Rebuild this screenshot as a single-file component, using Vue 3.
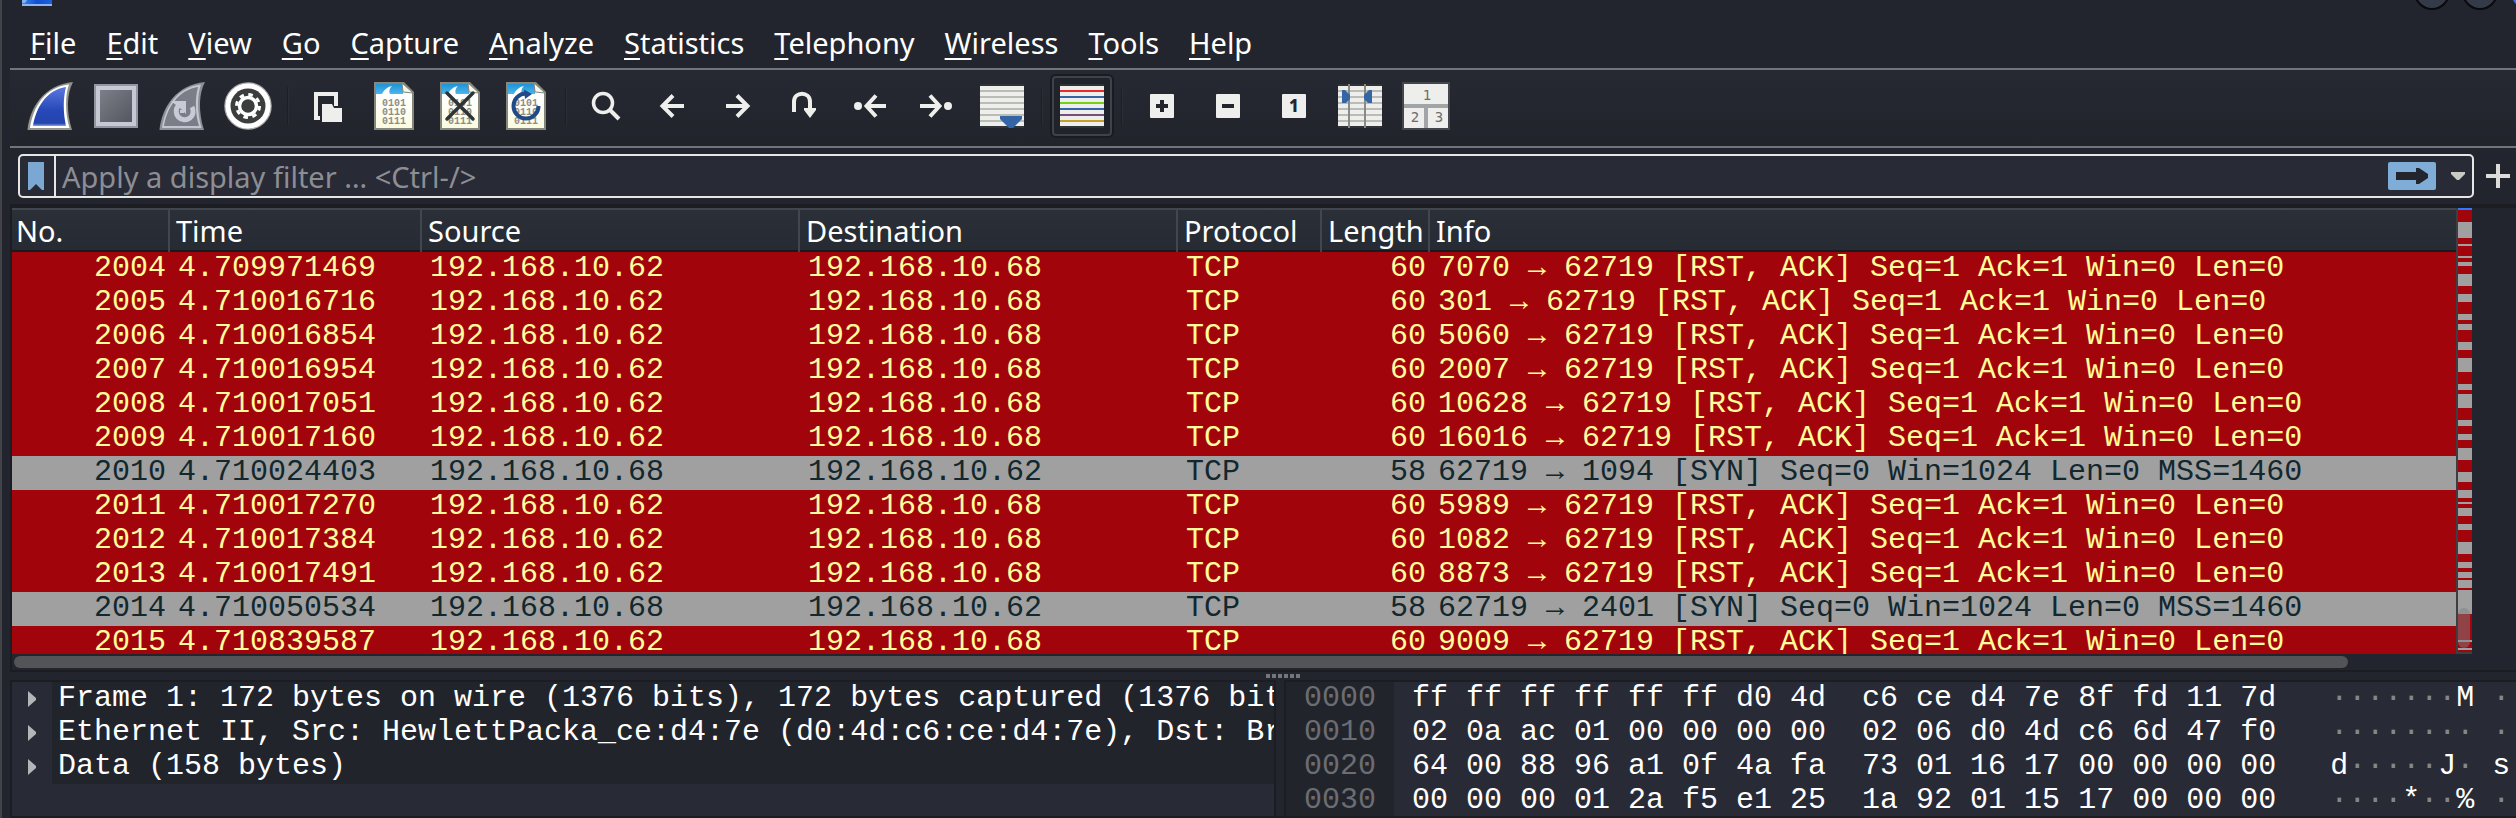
<script setup>
import { ref } from 'vue'

const menus = ['File', 'Edit', 'View', 'Go', 'Capture', 'Analyze', 'Statistics', 'Telephony', 'Wireless', 'Tools', 'Help']
const filter = ref('')

const columns = [
  { name: 'No.', cls: 'c-no' },
  { name: 'Time', cls: 'c-time' },
  { name: 'Source', cls: 'c-addr' },
  { name: 'Destination', cls: 'c-addr' },
  { name: 'Protocol', cls: 'c-proto' },
  { name: 'Length', cls: 'c-len' },
  { name: 'Info', cls: 'c-info' },
]

const rst = (no, time, port) => ({
  no, time, src: '192.168.10.62', dst: '192.168.10.68', len: 60, kind: 'rst',
  info: `${port} → 62719 [RST, ACK] Seq=1 Ack=1 Win=0 Len=0`,
})
const syn = (no, time, port) => ({
  no, time, src: '192.168.10.68', dst: '192.168.10.62', len: 58, kind: 'syn',
  info: `62719 → ${port} [SYN] Seq=0 Win=1024 Len=0 MSS=1460`,
})
const packets = [
  rst(2004, '4.709971469', 7070),
  rst(2005, '4.710016716', 301),
  rst(2006, '4.710016854', 5060),
  rst(2007, '4.710016954', 2007),
  rst(2008, '4.710017051', 10628),
  rst(2009, '4.710017160', 16016),
  syn(2010, '4.710024403', 1094),
  rst(2011, '4.710017270', 5989),
  rst(2012, '4.710017384', 1082),
  rst(2013, '4.710017491', 8873),
  syn(2014, '4.710050534', 2401),
  rst(2015, '4.710839587', 9009),
]

// [top, height] of each grey band in the packet minimap
const bands = [
  [14, 16], [36, 2], [48, 2], [54, 4], [66, 12], [86, 8], [106, 6], [116, 6], [134, 8], [150, 14],
  [176, 6], [186, 14], [212, 6], [226, 6], [240, 12], [264, 10], [282, 8], [294, 2], [300, 8],
  [316, 6], [334, 12], [354, 6], [364, 6], [372, 8], [382, 24], [432, 2], [440, 2],
]

const tree = [
  'Frame 1: 172 bytes on wire (1376 bits), 172 bytes captured (1376 bit',
  'Ethernet II, Src: HewlettPacka_ce:d4:7e (d0:4d:c6:ce:d4:7e), Dst: Br',
  'Data (158 bytes)',
]

const hex = [
  { off: '0000', a: 'ff ff ff ff ff ff d0 4d', b: 'c6 ce d4 7e 8f fd 11 7d', t: '·······M ·' },
  { off: '0010', a: '02 0a ac 01 00 00 00 00', b: '02 06 d0 4d c6 6d 47 f0', t: '········ ·' },
  { off: '0020', a: '64 00 88 96 a1 0f 4a fa', b: '73 01 16 17 00 00 00 00', t: 'd·····J· s' },
  { off: '0030', a: '00 00 00 01 2a f5 e1 25', b: '1a 92 01 15 17 00 00 00', t: '····*··% ·' },
]
const pieces = (t) => t.split(/(·+)/).filter(Boolean)

const lineYs = [8, 14, 20, 26, 32, 38]
const lineColors = ['#ef2929', '#3465a4', '#73d216', '#3465a4', '#75507b', '#c4a02a']

const tools = [
  { id: 'start', label: 'Start capturing packets' },
  { id: 'stop', label: 'Stop capturing packets' },
  { id: 'restart', label: 'Restart current capture' },
  { id: 'options', label: 'Capture options' },
  { id: 'sep' },
  { id: 'open', label: 'Open a capture file' },
  { id: 'save', label: 'Save this capture file' },
  { id: 'close', label: 'Close this capture file' },
  { id: 'reload', label: 'Reload this file' },
  { id: 'sep' },
  { id: 'find', label: 'Find a packet' },
  { id: 'back', label: 'Previous packet' },
  { id: 'forward', label: 'Next packet' },
  { id: 'goto', label: 'Go to packet' },
  { id: 'first', label: 'First packet' },
  { id: 'last', label: 'Last packet' },
  { id: 'scroll', label: 'Auto scroll' },
  { id: 'sep' },
  { id: 'color', label: 'Colorize packets' },
  { id: 'sep' },
  { id: 'zoomin', label: 'Enlarge text' },
  { id: 'zoomout', label: 'Shrink text' },
  { id: 'zoomone', label: 'Normal text size' },
  { id: 'resize', label: 'Resize columns' },
  { id: 'layout', label: 'Reset layout' },
]
</script>

<template>
  <div class="window">
    <header class="titlebar">
      <svg class="app-icon" width="30" height="6" viewBox="0 0 30 6" aria-hidden="true">
        <defs>
          <linearGradient id="appblue" x1="0" x2="1" y1="0" y2="0">
            <stop offset="0" stop-color="#3b86ee" /><stop offset="0.5" stop-color="#0f4fd0" /><stop offset="1" stop-color="#1d62dc" />
          </linearGradient>
        </defs>
        <rect width="30" height="6" fill="url(#appblue)" />
        <path d="M0 6V4H30V6Z" fill="#8fb4ee" />
        <path d="M0 0H5L3 3H0Z" fill="#7db4f6" />
      </svg>
      <svg class="win-buttons" width="104" height="10" viewBox="0 0 104 10" aria-hidden="true">
        <circle cx="20" cy="-8" r="17" fill="#343a47" stroke="#08090c" stroke-width="2" />
        <circle cx="68" cy="-8" r="17" fill="#343a47" stroke="#08090c" stroke-width="2" />
        <circle cx="116" cy="-8" r="17" fill="#2777ff" />
      </svg>
    </header>

    <nav class="menubar">
      <button v-for="m in menus" :key="m" type="button"><u>{{ m[0] }}</u>{{ m.slice(1) }}</button>
    </nav>

    <div class="toolbar" role="toolbar">
      <template v-for="(t, i) in tools" :key="i">
        <span v-if="t.id === 'sep'" class="sep"></span>
        <button v-else type="button" class="tool" :class="{ on: t.id === 'color' }" :aria-label="t.label">
          <svg width="48" height="48" viewBox="0 0 48 48" aria-hidden="true">
            <defs v-if="t.id === 'start'">
              <linearGradient id="fin" x1="0" x2="0" y1="0" y2="1">
                <stop offset="0" stop-color="#5a78e0" /><stop offset="0.6" stop-color="#2748b8" /><stop offset="0.93" stop-color="#2345ae" /><stop offset="1" stop-color="#8c9ee0" />
              </linearGradient>
              <linearGradient id="gray" x1="0" x2="1" y1="0" y2="1">
                <stop offset="0" stop-color="#7c7f87" /><stop offset="1" stop-color="#54575f" />
              </linearGradient>
              <linearGradient id="sky" x1="0" x2="0" y1="0" y2="1">
                <stop offset="0" stop-color="#1f93d4" /><stop offset="1" stop-color="#4cb6ee" />
              </linearGradient>
              <linearGradient id="paper" x1="0" x2="0" y1="0" y2="1">
                <stop offset="0.3" stop-color="#ffffff" /><stop offset="1" stop-color="#fbfbe0" />
              </linearGradient>
            </defs>

            <template v-if="t.id === 'start'">
              <path d="M1.500 48C4 25 18 3 47 0C41 11 40 29 46 48Z" fill="#94948f" />
              <path d="M4 46C7 25 19 5 43 2.500C39 13 39 31 43.500 46Z" fill="#fff" />
              <path d="M7 44C10 26 20 8 40 5C37 16 37 31 40 44Z" fill="url(#fin)" />
            </template>
            <template v-else-if="t.id === 'stop'">
              <rect x="2" y="2" width="44" height="44" fill="#9296a1" />
              <rect x="4" y="4" width="40" height="40" fill="#c6c9d3" />
              <rect x="8" y="8" width="32" height="32" fill="url(#gray)" />
            </template>
            <template v-else-if="t.id === 'restart'">
              <path d="M1.500 48C4 25 18 3 47 0C41 11 40 29 46 48Z" fill="#8b8e97" />
              <path d="M4 46C7 25 19 5 43 2.500C39 13 39 31 43.500 46Z" fill="#c3c6d0" />
              <path d="M6 44C9 26 20 8 40 5C37 16 37 31 41 44Z" fill="#7b7e86" />
              <path d="M20 24A8.500 8.500 0 1 0 34 25" fill="none" stroke="#c8cbd5" stroke-width="5" />
              <path d="M13 19H28V32L23 27L18 23Z" fill="#c8cbd5" />
              <path d="M24 28V31" stroke="#c8cbd5" stroke-width="4" />
            </template>
            <template v-else-if="t.id === 'options'">
              <circle cx="24" cy="24" r="23" fill="#fff" stroke="#aaa" stroke-width="1.500" />
              <circle cx="24" cy="24" r="17.500" fill="#3c3e3e" />
              <circle cx="24" cy="24" r="8.500" fill="none" stroke="#fff" stroke-width="3.500" />
              <circle cx="24" cy="24" r="11.500" fill="none" stroke="#fff" stroke-width="3" stroke-dasharray="4.500 4.530" />
              <circle cx="24" cy="24" r="20.500" fill="none" stroke="#fff" stroke-width="4" />
            </template>
            <template v-else-if="t.id === 'open'">
              <path d="M16 36H12V12H32V24" fill="none" stroke="#eeeeec" stroke-width="4" />
              <path d="M18 22H28L30 26H38V40H18Z" fill="#eeeeec" />
            </template>
            <template v-else-if="['save', 'close', 'reload'].includes(t.id)">
              <path d="M4 0H34L44 10V48H4Z" fill="#85867c" />
              <path d="M6 2H33L42 11V46H6Z" fill="url(#paper)" />
              <path d="M6 2H33V12H6Z" fill="url(#sky)" />
              <path d="M12 12C14 8 17 5 22 4C19 7 19 10 20 12Z" fill="#fff" />
              <path d="M32 1L43 11L33 10Z" fill="#f6f6ea" stroke="#85867c" stroke-width="1" />
              <g font-family="Liberation Mono, monospace" font-size="10" font-weight="700" fill="#8d8e8a">
                <text x="12" y="24">0101</text>
                <text x="12" y="33">0110</text>
                <text x="12" y="42">0111</text>
              </g>
              <path v-if="t.id === 'close'" d="M11 11L37 37M37 11L11 37" stroke="#2e3436" stroke-width="3.500" stroke-linecap="round" />
              <template v-if="t.id === 'reload'">
                <path d="M36.500 24A12.500 12.500 0 1 1 24 11.500" fill="none" stroke="#204a87" stroke-width="4" />
                <path d="M22 7.500L30 12L23 17Z" fill="#204a87" />
              </template>
            </template>
            <template v-else-if="t.id === 'find'">
              <circle cx="21" cy="21" r="9.500" fill="none" stroke="#eeeeec" stroke-width="3.500" />
              <path d="M28 28L37 37" stroke="#eeeeec" stroke-width="4" />
            </template>
            <path v-else-if="t.id === 'back'" d="M36 24H15M25 13.500L14.500 24L25 34.500" class="ink" />
            <path v-else-if="t.id === 'forward'" d="M12 24H33M23 13.500L33.500 24L23 34.500" class="ink" />
            <template v-else-if="t.id === 'goto'">
              <path d="M14 30V20C14 9 30 9 30 20V30" class="ink" />
              <path d="M24 26H36V28L30 36L24 28Z" fill="#eeeeec" />
            </template>
            <template v-else-if="t.id === 'first'">
              <circle cx="12" cy="24" r="4" fill="#eeeeec" />
              <path d="M40 24H21M30 13.500L20.500 24L30 34.500" class="ink" />
            </template>
            <template v-else-if="t.id === 'last'">
              <path d="M8 24H27M18 13.500L27.500 24L18 34.500" class="ink" />
              <circle cx="36" cy="24" r="4" fill="#eeeeec" />
            </template>
            <template v-else-if="['scroll', 'color', 'resize'].includes(t.id)">
              <rect x="2" y="2" width="44" height="44" fill="#2e3436" />
              <rect x="2" y="4" width="44" height="40" fill="#eeeeec" />
              <rect v-for="(y, k) in lineYs" :key="y" x="2" :y="y" width="44" height="2" :fill="t.id === 'color' ? lineColors[k] : '#babdb6'" />
              <path v-if="t.id === 'scroll'" d="M22 34H44V37L37 44L35 46H31L29 44L22 37Z" fill="#3465a4" />
              <template v-if="t.id === 'resize'">
                <path d="M13 2V46M29 2V46" stroke="#888a85" stroke-width="2" />
                <path d="M6 8H9L14 13V17L10 21H6ZM36 8H33L28 13V17L32 21H36Z" fill="#3465a4" />
              </template>
            </template>
            <template v-else-if="['zoomin', 'zoomout', 'zoomone'].includes(t.id)">
              <rect x="12" y="12" width="24" height="24" rx="1" fill="#eeeeec" />
              <path v-if="t.id !== 'zoomone'" d="M18 24H30" stroke="#23252e" stroke-width="4" />
              <path v-if="t.id === 'zoomin'" d="M24 18V30" stroke="#23252e" stroke-width="4" />
              <text v-if="t.id === 'zoomone'" x="24" y="30" text-anchor="middle" font-family="Noto Sans, sans-serif" font-size="17" font-weight="800" fill="#23252e">1</text>
            </template>
            <template v-else-if="t.id === 'layout'">
              <rect width="48" height="48" fill="#43464a" />
              <rect x="2" y="2" width="44" height="44" fill="#eeeeec" />
              <path d="M2 24H46M24 24V46" stroke="#a2a5a8" stroke-width="4" />
              <g font-family="DejaVu Sans Mono, monospace" font-size="14" text-anchor="middle" fill="#6b6d6a">
                <text x="25" y="18">1</text>
                <text x="13" y="40">2</text>
                <text x="37" y="40">3</text>
              </g>
            </template>
          </svg>
        </button>
      </template>
    </div>

    <form class="filterbar" @submit.prevent>
      <div class="filter">
        <button type="button" class="bookmark" aria-label="Filter bookmarks">
          <svg width="16" height="28" viewBox="0 0 16 28" aria-hidden="true">
            <path d="M0 0H16V28H14L8 22L2 28H0Z" fill="#7ba7d3" />
          </svg>
        </button>
        <input v-model="filter" type="text" aria-label="Display filter" placeholder="Apply a display filter … &lt;Ctrl-/&gt;" />
        <button type="submit" class="apply" aria-label="Apply filter">
          <svg width="48" height="28" viewBox="0 0 48 28" aria-hidden="true">
            <rect width="48" height="28" rx="2" fill="#7fadd8" />
            <path d="M8 10H28V6H31L40 12V16L31 22H28V18H8Z" fill="#23252e" />
          </svg>
        </button>
        <button type="button" class="recent" aria-label="Recent filters">
          <svg width="16" height="8" viewBox="0 0 16 8" aria-hidden="true">
            <path d="M1 0H15V2L9 8H7L1 2Z" fill="#c9cac6" />
          </svg>
        </button>
      </div>
      <button type="button" class="plus" aria-label="Add filter button">
        <svg width="24" height="24" viewBox="0 0 24 24" aria-hidden="true">
          <path d="M0 12H24M12 0V24" stroke="#dcdcda" stroke-width="4" />
        </svg>
      </button>
    </form>

    <main class="panes">
      <section class="packets">
        <div class="list">
          <div class="clip">
            <table>
              <colgroup>
                <col v-for="(c, i) in columns" :key="i" :class="c.cls" />
              </colgroup>
              <thead>
                <tr><th v-for="c in columns" :key="c.name" scope="col">{{ c.name }}</th></tr>
              </thead>
              <tbody>
                <tr v-for="p in packets" :key="p.no" :class="p.kind">
                  <td class="num">{{ p.no }}</td>
                  <td>{{ p.time }}</td>
                  <td>{{ p.src }}</td>
                  <td>{{ p.dst }}</td>
                  <td>TCP</td>
                  <td class="num">{{ p.len }}</td>
                  <td>{{ p.info }}</td>
                </tr>
              </tbody>
            </table>
          </div>
          <svg class="minimap" width="14" viewBox="0 0 14 444" preserveAspectRatio="none" aria-hidden="true">
            <rect width="14" height="444" fill="#a2040c" />
            <rect width="14" height="2" fill="#2a7bff" />
            <rect v-for="b in bands" :key="b[0]" x="0" :y="b[0]" width="14" :height="b[1]" fill="#a0a0a0" />
            <rect x="0" y="400" width="12" height="40" rx="6" fill="#808080" fill-opacity="0.5" />
          </svg>
        </div>
        <div class="hscroll"><div class="thumb"></div></div>
      </section>

      <div class="splitter"><i v-for="n in 6" :key="n"></i></div>

      <div class="lower">
        <section class="details">
          <ul>
            <li v-for="line in tree" :key="line">
              <button type="button" aria-label="Expand">
                <svg width="8" height="16" viewBox="0 0 8 16" aria-hidden="true">
                  <path d="M0 0L8 7V9L0 16Z" fill="#b4b5b8" />
                </svg>
              </button>
              <span>{{ line }}</span>
            </li>
          </ul>
        </section>
        <section class="bytes">
          <div v-for="h in hex" :key="h.off" class="hexrow">
            <span class="off">{{ h.off }}</span>
            <span class="data">{{ h.a }}</span>
            <span class="data">{{ h.b }}</span>
            <span class="ascii"><span v-for="(s, i) in pieces(h.t)" :key="i" :class="{ dim: s[0] === '·' }">{{ s }}</span></span>
          </div>
        </section>
      </div>
    </main>
  </div>
</template>

<style>
body {
  margin: 0;
  background: #23252e;
}
</style>

<style scoped>
.window {
  box-sizing: border-box;
  display: flex;
  flex-direction: column;
  height: 100vh;
  overflow: hidden;
  padding-left: 8px;
  border-left: 2px solid #424349;
  background: #23252e;
  color: #fff;
  font-family: "Noto Sans", sans-serif;
  font-size: 29px;
}
button {
  margin: 0;
  padding: 0;
  border: 0;
  background: none;
  color: inherit;
  font: inherit;
}
svg {
  display: block;
}
.titlebar {
  display: flex;
  justify-content: space-between;
  align-items: flex-start;
  height: 10px;
  padding-left: 12px;
}
.menubar {
  display: flex;
  gap: 30px;
  height: 58px;
  padding-left: 20px;
  border-bottom: 2px solid #73747b;
}
.menubar button {
  line-height: 66px;
  height: 58px;
}
.menubar u {
  text-decoration: underline;
  text-decoration-thickness: 2px;
  text-underline-offset: 4px;
  text-decoration-skip-ink: none;
}
.toolbar {
  display: flex;
  align-items: center;
  height: 72px;
  padding: 0 0 4px 7px;
  background: linear-gradient(#262932, #22242c);
  border-bottom: 2px solid #73747b;
}
.tool {
  box-sizing: border-box;
  flex: none;
  display: flex;
  align-items: center;
  justify-content: center;
  width: 60px;
  height: 60px;
  margin: 0 3px;
}
.tool.on {
  border: 2px solid #40424b;
  border-radius: 4px;
  box-shadow: 0 0 0 2px #1a1b22;
  background: #21232b;
}
.sep {
  flex: none;
  box-sizing: border-box;
  width: 2px;
  height: 38px;
  margin: 0 6px;
  border-left: 1px solid #1d1f27;
  border-right: 1px solid #2b2d36;
}
.ink {
  fill: none;
  stroke: #eeeeec;
  stroke-width: 4;
}
.filterbar {
  display: flex;
  align-items: center;
  gap: 12px;
  height: 44px;
  padding: 6px 6px 6px 8px;
}
.filter {
  box-sizing: border-box;
  flex: 1;
  display: flex;
  align-items: center;
  height: 44px;
  border: 2px solid #e6e6e4;
  border-radius: 5px;
  background: #282a36;
}
.bookmark {
  display: flex;
  align-items: center;
  align-self: stretch;
  padding: 0 10px 0 8px;
  border-right: 2px solid #e6e6e4;
}
.filter input {
  flex: 1;
  min-width: 0;
  height: 40px;
  padding: 0 0 0 6px;
  border: 0;
  outline: 0;
  background: none;
  color: #fff;
  font: inherit;
}
.filter input::placeholder {
  color: #8d8e93;
  opacity: 1;
}
.recent {
  padding: 0 6px 0 14px;
}
.panes {
  flex: 1;
  min-height: 0;
  display: flex;
  flex-direction: column;
  border-bottom: 2px solid #1c1d22;
}
.packets {
  flex: 1;
  min-height: 0;
  display: flex;
  flex-direction: column;
  border: solid #1c1d22;
  border-width: 4px 0 2px 2px;
}
.list {
  flex: 1;
  min-height: 0;
  display: flex;
  padding-right: 44px;
}
.clip {
  flex: 1;
  min-width: 0;
  overflow: hidden;
  border-right: 2px solid #3c3e42;
}
.minimap {
  height: 100%;
  box-sizing: border-box;
  border-bottom: 2px solid #3c3e42;
}
table {
  width: 100%;
  table-layout: fixed;
  border-spacing: 0;
  border-collapse: separate;
}
.c-no { width: 158px; }
.c-time { width: 252px; }
.c-addr { width: 378px; }
.c-proto { width: 144px; }
.c-len { width: 108px; }
th {
  box-sizing: border-box;
  height: 44px;
  padding: 0 0 0 6px;
  border: solid #41464f;
  border-width: 2px 2px 0 0;
  box-shadow: inset 0 -2px #181a20;
  background: linear-gradient(#2b3038, #262a32);
  font-weight: 400;
  line-height: 40px;
  text-align: left;
}
th:first-child {
  padding-left: 4px;
}
th:last-child {
  border-right-width: 0;
}
td {
  height: 34px;
  padding: 0 0 0 8px;
  overflow: hidden;
  white-space: pre;
  vertical-align: top;
  font: 30px/32px "Liberation Mono", monospace;
}
td.num {
  padding: 0 4px 0 0;
  text-align: right;
}
.rst {
  background: #a2040c;
  color: #fffc9c;
}
.syn {
  background: #a0a0a0;
  color: #12272e;
}
.hscroll {
  height: 12px;
  padding: 2px 168px 2px 2px;
}
.thumb {
  height: 12px;
  border-radius: 6px;
  background: #535457;
}
.splitter {
  display: flex;
  justify-content: center;
  gap: 2px;
  height: 6px;
  padding: 2px 0 0 40px;
}
.splitter i {
  width: 4px;
  height: 4px;
  background: #75767c;
}
.lower {
  display: grid;
  grid-template-columns: minmax(0, 1266fr) minmax(0, 1232fr);
  gap: 8px;
  height: 136px;
  overflow: hidden;
  font: 30px/32px "Liberation Mono", monospace;
}
.details,
.bytes {
  border: solid #1c1d22;
  border-width: 2px 0 0 2px;
  overflow: hidden;
  background: #282a36;
}
.details {
  border-right-width: 2px;
}
.details ul {
  margin: 0;
  padding: 0;
  list-style: none;
}
.details li {
  display: flex;
  height: 34px;
}
.details li button {
  flex: none;
  width: 40px;
  padding-left: 16px;
}
.details li span {
  flex: 1;
  padding-left: 6px;
  overflow: hidden;
  white-space: pre;
  background: #22242c;
}
.hexrow {
  display: flex;
  height: 34px;
  white-space: pre;
}
.off {
  flex: none;
  padding: 0 18px;
  height: 34px;
  background: #22242c;
  color: #6b6d72;
}
.data {
  flex: none;
  padding: 0 18px;
}
.ascii {
  padding-left: 36px;
}
.dim {
  color: #85868d;
}
</style>
